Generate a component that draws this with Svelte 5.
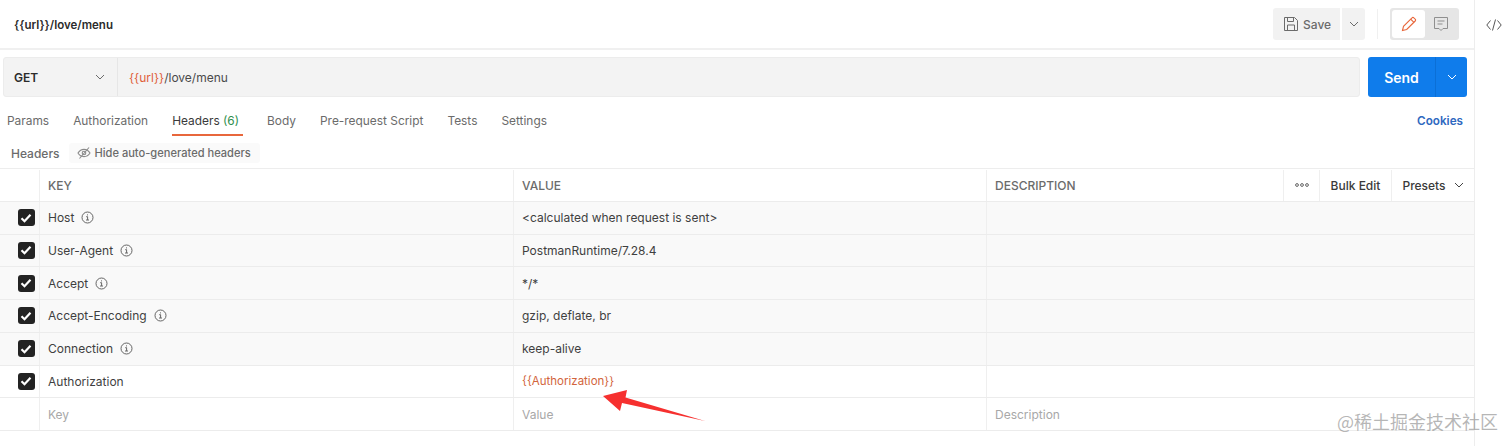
<script>
  const tabs = [
    { label: 'Params' },
    { label: 'Authorization' },
    { label: 'Headers', count: '(6)', active: true },
    { label: 'Body' },
    { label: 'Pre-request Script' },
    { label: 'Tests' },
    { label: 'Settings' }
  ];
  const rows = [
    { key: 'Host', info: true, value: '<calculated when request is sent>' },
    { key: 'User-Agent', info: true, value: 'PostmanRuntime/7.28.4' },
    { key: 'Accept', info: true, value: '*/*' },
    { key: 'Accept-Encoding', info: true, value: 'gzip, deflate, br' },
    { key: 'Connection', info: true, value: 'keep-alive' },
    { key: 'Authorization', value: '{{Authorization}}', variable: true, plain: true }
  ];
</script>

<div class="page">
  <main class="main">
    <header class="titlebar">
      <div class="title">{'{{url}}'}/love/menu</div>
      <div class="actions">
        <div class="save">
          <button class="save-btn">
            <svg width="16" height="16" viewBox="0 0 16 16" fill="none" stroke="#6b6b6b" stroke-width="1">
              <path d="M1.5 1.5h10l3 3v10h-13z" />
              <path d="M4.5 1.5v4h6v-4M4.5 14.5v-5.5h7v5.5" />
            </svg>
            <span>Save</span>
          </button>
          <button class="save-more">
            <svg width="10" height="6" viewBox="0 0 10 6" fill="none" stroke="#6b6b6b"><path d="M1 1l4 4 4-4" /></svg>
          </button>
        </div>
        <div class="vsep"></div>
        <div class="toggle">
          <div class="toggle-on">
            <svg width="16" height="16" viewBox="0 0 16 16" fill="none" stroke="#e8673c" stroke-width="1.100">
              <path d="M1.5 14.5l1-4.2 8.5-8.5a1.3 1.3 0 0 1 1.900 0l1.300 1.300a1.300 1.300 0 0 1 0 1.900l-8.500 8.500z" />
              <path d="M9.700 3.100l3.200 3.200" />
            </svg>
          </div>
          <div class="toggle-off">
            <svg width="16" height="16" viewBox="0 0 16 16" fill="none" stroke="#8f8f8f" stroke-width="1">
              <path d="M1.500 1.500h13v11h-4.500l-2 2-2-2h-4.500z" />
              <path d="M4.500 5h7M4.500 8h5" />
            </svg>
          </div>
        </div>
      </div>
    </header>

    <section class="request">
      <div class="urlbox">
        <div class="method">
          <span>GET</span>
          <svg width="10" height="6" viewBox="0 0 10 6" fill="none" stroke="#6b6b6b"><path d="M1 1l4 4 4-4" /></svg>
        </div>
        <div class="url"><span class="var">{'{{url}}'}</span>/love/menu</div>
      </div>
      <div class="send">
        <span class="send-label">Send</span>
        <span class="send-more">
          <svg width="10" height="6" viewBox="0 0 10 6" fill="none" stroke="#fff"><path d="M1 1l4 4 4-4" /></svg>
        </span>
      </div>
    </section>

    <nav class="tabs">
      {#each tabs as t}
        <div class="tab" class:active={t.active}>
          {t.label}{#if t.count}&nbsp;<span class="count">{t.count}</span>{/if}
        </div>
      {/each}
      <div class="cookies">Cookies</div>
    </nav>

    <div class="subbar">
      <span class="sublabel">Headers</span>
      <span class="pill">
        <svg width="14" height="12" viewBox="0 0 14 12" fill="none" stroke="#8a8a8a" stroke-width="1.100">
          <path d="M1 6c1.500-2.400 3.500-3.600 6-3.600s4.500 1.200 6 3.600c-1.500 2.400-3.500 3.600-6 3.600s-4.500-1.200-6-3.600z" />
          <circle cx="7" cy="6" r="1.800" />
          <path d="M2.500 11.500l9.500-11" />
        </svg>
        Hide auto-generated headers
      </span>
    </div>

    <div class="table">
      <div class="row head">
        <div class="cell check"></div>
        <div class="cell">KEY</div>
        <div class="cell">VALUE</div>
        <div class="cell desc-head">
          <span class="desc-title">DESCRIPTION</span>
          <span class="h-btn dots">
            <svg width="14" height="4" viewBox="0 0 14 4" fill="none" stroke="#555" stroke-width="0.900">
              <circle cx="2" cy="2" r="1.400" /><circle cx="7" cy="2" r="1.400" /><circle cx="12" cy="2" r="1.400" />
            </svg>
          </span>
          <span class="h-btn bulk">Bulk Edit</span>
          <span class="h-btn presets">
            Presets
            <svg width="10" height="6" viewBox="0 0 10 6" fill="none" stroke="#444"><path d="M1 1l4 4 4-4" /></svg>
          </span>
        </div>
      </div>

      {#each rows as r}
        <div class="row" class:plain={r.plain}>
          <div class="cell check">
            <span class="box">
              <svg width="12" height="10" viewBox="0 0 12 10" fill="none" stroke="#fff" stroke-width="2.200">
                <path d="M1.500 5.200l3 3 6-6.500" />
              </svg>
            </span>
          </div>
          <div class="cell key">
            <span>{r.key}</span>
            {#if r.info}
              <svg class="info" width="13" height="13" viewBox="0 0 13 13" fill="none" stroke="#555">
                <circle cx="6.500" cy="6.500" r="5.500" stroke-width="0.900" />
                <path d="M5.200 5.700h1.400v3.200M5 9h3M6.500 3.400v1" stroke-width="0.900" />
              </svg>
            {/if}
          </div>
          <div class="cell" class:var={r.variable}>{r.value}</div>
          <div class="cell"></div>
        </div>
      {/each}

      <div class="row plain last">
        <div class="cell check"></div>
        <div class="cell ph">Key</div>
        <div class="cell ph">Value</div>
        <div class="cell ph">Description</div>
      </div>
    </div>
  </main>

  <aside class="side">
    <svg width="16" height="12" viewBox="0 0 16 12" fill="none" stroke="#555" stroke-width="1">
      <path d="M4.500 1.500L0.800 6l3.700 4.500M11.500 1.500L15.200 6l-3.700 4.500M9.500 0.500L6.500 11.500" />
    </svg>
  </aside>

  <svg class="arrow" width="110" height="40" viewBox="600 386 110 40">
    <polygon points="603,396 627,390 625.500,397.500 705,421 622,403 620,411" fill="#f6302f" />
  </svg>
  <div class="watermark">@稀土掘金技术社区</div>
</div>

<style>
  :global(body) {
    margin: 0;
    background: #fff;
  }
  .page {
    position: relative;
    display: flex;
    width: 1512px;
    height: 446px;
    overflow: hidden;
    font-family: Inter, "Noto Sans", sans-serif;
    font-size: 12px;
    color: #3a3a3a;
  }
  .main {
    width: 1474px;
    flex: none;
    border-right: 1px solid #ededed;
  }
  .side {
    flex: 1;
    display: flex;
    justify-content: center;
    padding-top: 19px;
    height: 20px;
  }
  .titlebar {
    box-sizing: border-box;
    display: flex;
    align-items: center;
    justify-content: space-between;
    border-bottom: 2px solid #f0f0f0;
    padding: 0 14px;
    height: 50px;
  }
  .title {
    font-weight: 600;
    font-size: 11.500px;
    color: #2b2b2b;
    padding-top: 1px;
  }
  .actions {
    display: flex;
    align-items: center;
    margin-right: 1px;
  }
  button {
    border: 0;
    font: inherit;
    padding: 0;
    background: #f2f2f2;
    color: #6b6b6b;
    display: flex;
    align-items: center;
    height: 32px;
  }
  .save {
    display: flex;
    gap: 2px;
  }
  .save-btn {
    width: 67px;
    gap: 4px;
    padding-left: 10px;
    border-radius: 3px 0 0 3px;
    font-weight: 500;
  }
  .save-more {
    width: 23px;
    justify-content: center;
    border-radius: 0 3px 3px 0;
  }
  .vsep {
    width: 1px;
    height: 30px;
    background: #f0f0f0;
    margin: 0 12px;
  }
  .toggle {
    display: flex;
    width: 69px;
    height: 32px;
    box-sizing: border-box;
    padding: 2px;
    background: #e6e6e6;
    border-radius: 3px;
  }
  .toggle-on,
  .toggle-off {
    display: flex;
    align-items: center;
    justify-content: center;
    height: 28px;
  }
  .toggle-on {
    width: 33px;
    background: #fff;
    border-radius: 3px;
  }
  .toggle-off {
    flex: 1;
  }
  .request {
    display: flex;
    gap: 8px;
    padding: 7px 7px 0 3px;
    height: 40px;
  }
  .urlbox {
    flex: 1;
    display: flex;
    background: #f3f3f3;
    border: 1px solid #ececec;
    border-radius: 3px;
    box-sizing: border-box;
  }
  .method {
    width: 114px;
    flex: none;
    box-sizing: border-box;
    display: flex;
    align-items: center;
    justify-content: space-between;
    padding: 0 12px 0 10px;
    border-right: 1px solid #e6e6e6;
    font-weight: 600;
    color: #2b2b2b;
  }
  .url {
    display: flex;
    align-items: center;
    padding-left: 11px;
    color: #4a4a4a;
  }
  .var {
    color: #e0603a;
  }
  .send {
    width: 99px;
    display: flex;
    background: #0f7ceb;
    border-radius: 3px;
    color: #fff;
    font-weight: 600;
    font-size: 14px;
  }
  .send-label {
    width: 67px;
    display: flex;
    align-items: center;
    justify-content: center;
    border-right: 1px solid #0b6fd6;
  }
  .send-more {
    flex: 1;
    display: flex;
    align-items: center;
    justify-content: center;
  }
  .tabs {
    display: flex;
    align-items: flex-start;
    gap: 24px;
    padding: 0 11px 0 7px;
    height: 39px;
    box-sizing: border-box;
    font-size: 11.900px;
  }
  .tab {
    padding-top: 16px;
    height: 39px;
    box-sizing: border-box;
    color: #6b6b6b;
  }
  .tab.active {
    color: #3a3a3a;
    position: relative;
    padding-right: 4px;
  }
  .tab.active::after {
    content: "";
    position: absolute;
    left: 0;
    right: 0;
    bottom: 0;
    height: 2px;
    background: #e8673c;
  }
  .count {
    color: #2f8f4e;
  }
  .cookies {
    margin-left: auto;
    padding-top: 17px;
    color: #2e68c0;
    font-weight: 600;
    font-size: 11.700px;
  }
  .subbar {
    display: flex;
    align-items: center;
    gap: 9px;
    padding: 2px 0 0 11px;
    height: 32px;
    box-sizing: border-box;
  }
  .sublabel {
    font-weight: 500;
    color: #6b6b6b;
    font-size: 12px;
  }
  .pill {
    display: flex;
    align-items: center;
    gap: 4px;
    height: 20px;
    padding: 0 9px 0 8px;
    background: #fafafa;
    border-radius: 3px;
    font-weight: 500;
    font-size: 11.100px;
    color: #6b6b6b;
  }
  .table {
    border-top: 1px solid #ededed;
  }
  .row {
    display: grid;
    grid-template-columns: 39px 474px 473px 488px;
    height: 32.750px;
    box-sizing: border-box;
    background: #f9f9f9;
    border-bottom: 1px solid #ececec;
  }
  .row.head {
    height: 32.800px;
    padding-top: 1px;
  }
  .row.head,
  .row.plain {
    background: #fff;
  }
  .cell {
    display: flex;
    align-items: center;
    padding-left: 8px;
    border-left: 1px solid #efefef;
    min-width: 0;
    color: #3f3f3f;
  }
  .cell.var {
    color: #d2643c;
    font-size: 11.500px;
  }
  .cell.check {
    border-left: 0;
    padding: 0 0 0 17.500px;
  }
  .head .cell {
    font-weight: 500;
    color: #6b6b6b;
  }
  .desc-title {
    flex: 1;
  }
  .head .h-btn {
    display: flex;
    align-items: center;
    justify-content: center;
    height: 100%;
    border-left: 1px solid #efefef;
    color: #3a3a3a;
    font-size: 12px;
    box-sizing: border-box;
  }
  .dots {
    width: 36px;
  }
  .bulk {
    width: 72px;
  }
  .presets {
    width: 83px;
    gap: 8px;
  }
  .box {
    width: 17px;
    height: 17px;
    border-radius: 3px;
    background: #232323;
    display: flex;
    align-items: center;
    justify-content: center;
  }
  .key {
    gap: 7px;
  }
  .info {
    flex: none;
  }
  .ph {
    color: #a8a8a8;
  }
  .arrow {
    position: absolute;
    left: 600px;
    top: 386px;
  }
  .watermark {
    position: absolute;
    left: 1337px;
    top: 409px;
    font-family: "Noto Sans CJK SC", sans-serif;
    font-size: 18px;
    line-height: 24px;
    color: rgba(110, 110, 110, 0.5);
    white-space: nowrap;
  }
</style>
